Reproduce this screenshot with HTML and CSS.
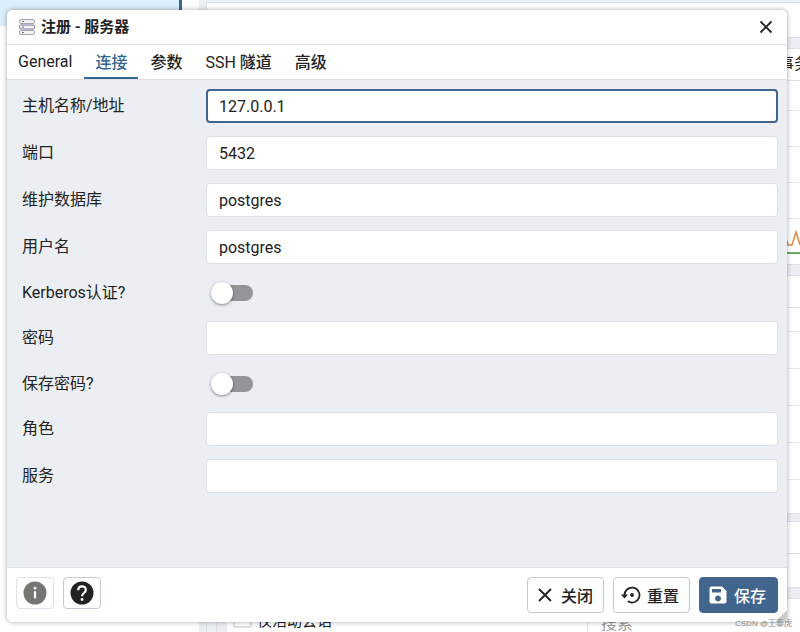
FILE: index.html
```html
<!DOCTYPE html>
<html lang="zh-CN">
<head>
    <meta charset="UTF-8">
    <meta name="viewport" content="width=device-width, initial-scale=1.0">
    <title>注册 - 服务器</title>
    <link rel="stylesheet" href="styles.css">
</head>
<body>
    <div class="app">
        <aside class="sidebar">
            <div class="tree-row"></div>
        </aside>
        <main class="dashboard">
            <section class="card card-top"></section>
            <section class="card">
                <header class="card-header">事务</header>
                <div class="chart">
                    <div class="grid-line"></div>
                    <div class="grid-line"></div>
                    <div class="grid-line"></div>
                    <div class="grid-line"></div>
                    <svg class="chart-line" viewBox="0 0 24 30">
                        <path d="M10 8 L12 15 H16 L20 2 L24 15" fill="none" stroke="#e08a4a" stroke-width="1.5"/>
                        <path d="M0 23 H24" stroke="#6bae63" stroke-width="2"/>
                    </svg>
                </div>
            </section>
            <section class="card">
                <header class="card-header"></header>
                <div class="chart chart-tall">
                    <div class="grid-line"></div>
                    <div class="grid-line"></div>
                    <div class="grid-line"></div>
                    <div class="grid-line"></div>
                    <div class="grid-line"></div>
                </div>
            </section>
            <section class="card card-activity">
                <header class="card-header"></header>
            </section>
            <section class="card card-sessions">
                <div class="gutter"></div>
                <label class="only-active"><input type="checkbox">仅活动会话</label>
                <input class="search" type="text" placeholder="搜索" aria-label="搜索">
            </section>
        </main>
    </div>

    <div class="dialog" role="dialog" aria-labelledby="dialog-title">
        <header class="dialog-header">
            <svg class="server-icon" viewBox="0 0 16 16">
                <g fill="#f1f1f4" stroke="#a4a4aa" stroke-width="1">
                    <rect x="0.5" y="0.5" width="15" height="4" rx="1.5"/>
                    <rect x="0.5" y="11.5" width="15" height="4" rx="1.5"/>
                    <rect x="0.5" y="6" width="15" height="4" rx="1.5" stroke="#77719f"/>
                </g>
                <path d="M3 2.5h2M3 8h2M3 13.5h2" stroke="#77777d" stroke-width="1"/>
            </svg>
            <h1 id="dialog-title">注册 - 服务器</h1>
            <button class="close-x" type="button" aria-label="关闭">
                <svg viewBox="0 0 14 14"><path d="M1.500 1.500 L12.500 12.500 M12.500 1.500 L1.500 12.500" stroke="#222" stroke-width="1.8"/></svg>
            </button>
        </header>

        <nav class="tabs">
            <button class="tab" type="button"><span class="latin">General</span></button>
            <button class="tab active" type="button">连接</button>
            <button class="tab" type="button">参数</button>
            <button class="tab" type="button"><span class="latin">SSH</span> 隧道</button>
            <button class="tab" type="button">高级</button>
        </nav>

        <form class="form">
            <div class="row">
                <label for="host">主机名称/地址</label>
                <input class="text focused" id="host" type="text" value="127.0.0.1">
            </div>
            <div class="row">
                <label for="port">端口</label>
                <input class="text" id="port" type="text" value="5432">
            </div>
            <div class="row">
                <label for="db">维护数据库</label>
                <input class="text" id="db" type="text" value="postgres">
            </div>
            <div class="row">
                <label for="username">用户名</label>
                <input class="text" id="username" type="text" value="postgres">
            </div>
            <div class="row row-switch">
                <label for="kerberos">Kerberos认证?</label>
                <input class="switch" id="kerberos" type="checkbox">
            </div>
            <div class="row">
                <label for="password">密码</label>
                <input class="text" id="password" type="password">
            </div>
            <div class="row row-switch">
                <label for="save-password">保存密码?</label>
                <input class="switch" id="save-password" type="checkbox">
            </div>
            <div class="row">
                <label for="role">角色</label>
                <input class="text" id="role" type="text">
            </div>
            <div class="row">
                <label for="service">服务</label>
                <input class="text" id="service" type="text">
            </div>
        </form>

        <footer class="dialog-footer">
            <button class="btn btn-icon" type="button" aria-label="信息" disabled>
                <svg viewBox="0 0 24 24">
                    <circle cx="12" cy="12" r="11.500" fill="#757575"/>
                    <path d="M12 11 V16.500" stroke="#fff" stroke-width="2.200" stroke-linecap="round"/>
                    <circle cx="12" cy="7.200" r="1.400" fill="#fff"/>
                </svg>
            </button>
            <button class="btn btn-icon" type="button" aria-label="帮助">
                <svg viewBox="0 0 24 24">
                    <circle cx="12" cy="12" r="11.500" fill="#222"/>
                    <path d="M8.200 9.300 C8.200 4 15.800 4 15.800 9 C15.800 12 12 12 12 15.300" fill="none" stroke="#fff" stroke-width="2.200"/>
                    <circle cx="12" cy="18.500" r="1.400" fill="#fff"/>
                </svg>
            </button>
            <span class="spacer"></span>
            <button class="btn" type="button">
                <svg viewBox="0 0 20 20"><path d="M4 4 L16 16 M16 4 L4 16" stroke="#222" stroke-width="1.8"/></svg>
                关闭
            </button>
            <button class="btn" type="button">
                <svg viewBox="0 0 20 20">
                    <path d="M3.500 10.500 A7.500 7.500 0 1 1 6.800 16.300" fill="none" stroke="#222" stroke-width="1.800"/>
                    <path d="M0 9.500 H7 L3.500 13.500 Z" fill="#222"/>
                    <circle cx="11" cy="10" r="1.900" fill="#222"/>
                </svg>
                重置
            </button>
            <button class="btn btn-primary" type="button">
                <svg viewBox="0 0 20 20"><path fill="#fff" fill-rule="evenodd" d="M3.500 1.500 H14 L18.500 6 V16.500 a2 2 0 0 1-2 2 H3.500 a2 2 0 0 1-2-2 V3.500 a2 2 0 0 1 2-2z M4 4 V7.500 H13 V4z M10 10.500 a3 3 0 1 0 0.010 0z"/></svg>
                保存
            </button>
        </footer>
        <span class="resize-handle"></span>
    </div>
    <span class="watermark">CSDN @王泰虎</span>
</body>
</html>
```
FILE: styles.css
```css
* {
    box-sizing: border-box;
}
body {
    margin: 0;
    height: 100vh;
    overflow: hidden;
    font-family: Roboto, "Noto Sans CJK SC", sans-serif;
    font-size: 16px;
    color: #222;
    background: #fff;
}
button, input {
    font: inherit;
    color: inherit;
}

/* page behind the dialog */
.app {
    display: flex;
    gap: 17px;
    height: 100vh;
    overflow: hidden;
}
.sidebar {
    flex: 0 0 182px;
    height: 95%;
    border-right: 3px solid #41658c;
}
.tree-row {
    height: 26px;
    background: #dbeefb;
}
.dashboard {
    flex: 1;
    min-width: 0;
    display: flex;
    flex-direction: column;
    gap: 10px;
    padding: 2px 0 0 7px;
    background: #ebeef3;
}
.card {
    flex-shrink: 0;
    background: #fff;
    border: 1px solid #dde0e6;
    border-right: none;
}
.card-top {
    height: 36px;
}
.card-header {
    height: 32px;
    line-height: 30px;
    text-align: right;
    margin-right: -10px;
    border-bottom: 1px solid #dde0e6;
}
.chart {
    position: relative;
    height: 183px;
}
.grid-line {
    height: 36px;
    border-bottom: 1px solid #e6e8ec;
}
.grid-line:first-child {
    height: 30px;
}
.chart-line {
    position: absolute;
    right: 0;
    bottom: 4px;
    width: 24px;
    height: 30px;
}
.chart-tall {
    height: 205px;
}
.chart-tall .grid-line {
    height: 37px;
}
.chart-tall .grid-line:first-child {
    height: 24px;
}
.card-activity {
    margin-top: -3px;
    height: 67px;
}
.card-sessions {
    display: flex;
    height: 60px;
}
.gutter {
    width: 20px;
    background: linear-gradient(#dde0e6, #dde0e6) 9px 0 / 1px 100% no-repeat #ebeef3;
}
.only-active {
    flex: 1;
    display: flex;
    align-items: center;
    gap: 5px;
    height: 40px;
    padding-left: 6px;
    font-size: 15px;
}
.only-active input {
    width: 19px;
    height: 18px;
    margin: 0;
    appearance: none;
    border: 2px solid #dde0e6;
    border-radius: 2px;
}
.search {
    width: 213px;
    height: 48px;
    padding: 0 13px;
    border: none;
    border-left: 1px solid #dde0e6;
}
.search::placeholder {
    color: #999;
}

/* dialog */
.dialog {
    position: absolute;
    top: 10px;
    right: 13px;
    bottom: 10px;
    left: 7px;
    display: flex;
    flex-direction: column;
    background: #fff;
    border-radius: 5px;
    box-shadow: 0 0 5px rgba(0, 0, 0, 0.35);
    overflow: hidden;
}
.dialog-header {
    display: flex;
    align-items: center;
    gap: 6px;
    height: 35px;
    padding: 0 12px;
    border-bottom: 1px solid #dde0e6;
}
.dialog-header h1 {
    flex: 1;
    margin: 0;
    font-size: 15px;
    line-height: 20px;
    font-weight: 700;
}
.server-icon {
    width: 16px;
    height: 16px;
}
.close-x {
    display: flex;
    padding: 2px;
    border: none;
    background: none;
}
.close-x svg {
    width: 14px;
    height: 14px;
}
.tabs {
    display: flex;
    gap: 1px;
    height: 35px;
    border-bottom: 1px solid #dde0e6;
}
.tab {
    padding: 0 11px;
    border: none;
    border-bottom: 2px solid transparent;
    background: none;
    font-weight: 500;
}
.tab.active {
    color: #326690;
    border-bottom-color: #326690;
}
.latin {
    font-weight: 400;
}
.form {
    flex: 1;
    display: flex;
    flex-direction: column;
    gap: 13px;
    padding: 9px 9px 0 15px;
    background: #ebeef3;
    border-bottom: 1px solid #dde0e6;
}
.row {
    display: flex;
    align-items: center;
    height: 34px;
}
.row label {
    flex: 0 0 184px;
    line-height: 20px;
}
.row-switch {
    height: 31px;
}
.text {
    flex: 1;
    min-width: 0;
    height: 34px;
    padding: 0 12px;
    border: 1px solid #dde0e6;
    border-radius: 4px;
    outline: none;
    background: #fff;
}
.text.focused {
    padding: 0 11px;
    border: 2px solid #41658c;
}
.switch {
    position: relative;
    width: 36px;
    height: 16px;
    margin: 0 0 0 11px;
    appearance: none;
    border-radius: 8px;
    background: #939598;
}
.switch::before {
    content: "";
    position: absolute;
    top: -3px;
    left: -6px;
    width: 22px;
    height: 22px;
    border-radius: 50%;
    background: #fff;
    box-shadow: 0 1px 3px rgba(0, 0, 0, 0.45);
}
.dialog-footer {
    display: flex;
    align-items: flex-start;
    gap: 9px;
    height: 54px;
    padding: 9px 9px 0 9px;
}
.btn {
    display: flex;
    align-items: center;
    gap: 6px;
    height: 36px;
    padding: 0 10px 0 7px;
    border: 1px solid #c3cad6;
    border-radius: 4px;
    background: #fff;
    font-weight: 500;
}
.btn svg {
    width: 20px;
    height: 20px;
}
.btn-icon {
    justify-content: center;
    width: 38px;
    height: 32px;
    padding: 0;
}
.btn-icon svg {
    width: 24px;
    height: 24px;
}
.btn-icon:disabled {
    border-color: #dfe2ea;
}
.btn-primary {
    padding: 0 11px 0 8px;
    color: #fff;
    background: #41658c;
    border-color: #41658c;
}
.spacer {
    flex: 1;
}
.resize-handle {
    position: absolute;
    right: 0;
    bottom: 0;
    border: 6px solid #ccc;
    border-top-color: transparent;
    border-left-color: transparent;
}
.watermark {
    position: absolute;
    right: 8px;
    bottom: 2px;
    font-family: "Liberation Sans", "Noto Sans CJK SC", sans-serif;
    font-size: 8px;
    line-height: 13px;
    color: #888;
}
```
